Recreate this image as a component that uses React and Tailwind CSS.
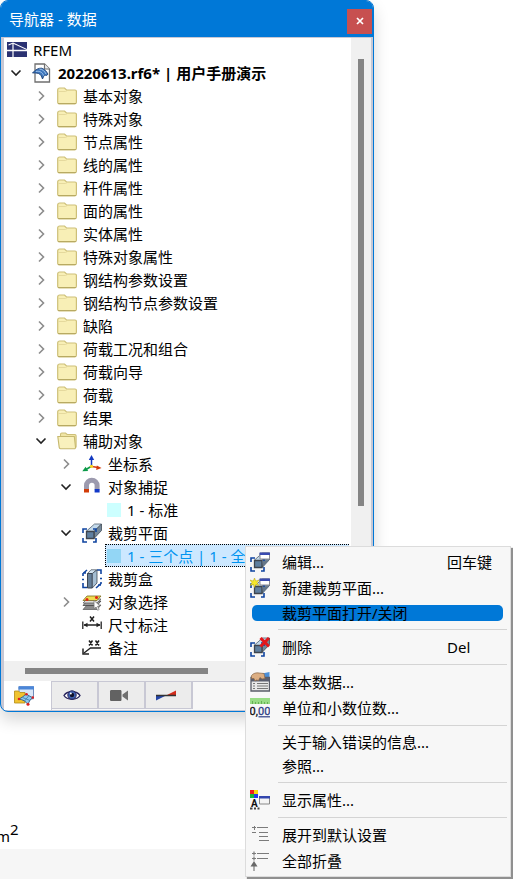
import { useState } from 'react'

const SANS = "font-['Noto_Sans','Noto_Sans_CJK_SC',sans-serif]"

function Svg({ children, crisp }) {
  return (
    <svg
      viewBox="0 0 20 20"
      className="size-5 shrink-0"
      fill="none"
      shapeRendering={crisp ? 'crispEdges' : 'auto'}
      aria-hidden="true"
    >
      {children}
    </svg>
  )
}

const RfemIcon = () => (
  <Svg>
    <path d="M0 2h20v15H0z" fill="#2b3272" />
    <path d="M0 10.500h20" stroke="#fff" strokeWidth="1.400" />
    <path d="M6 3v14" stroke="#fff" strokeWidth="1.200" />
    <path d="M1.500 5l4.500-2L20 9.500" stroke="#fff" strokeWidth="1.100" />
  </Svg>
)

const ModelIcon = () => (
  <Svg>
    <path d="M3 1h9.500l5 5v13H3z" fill="#fff" stroke="#6f6f6f" strokeWidth="1.300" />
    <path d="M12.500 1v5h5" fill="#eee" stroke="#6f6f6f" strokeWidth="1.200" />
    <path d="M.5 10C3.500 6.500 6.500 5 9.500 5.200c3 .8 5 3 6.500 6l-1.500 1.300c-1.800-.6-2.600 0-3 1.300L10.500 16C9.500 13 8.500 11.300 6.500 10.500 4.500 9.800 2.500 9.800.5 10z" fill="#3f77bd" stroke="#1d4277" strokeWidth=".9" />
    <path d="M4 8.500c3.500-.8 6.500.8 7.500 4M7.500 6c3 .2 5.200 2.200 6.500 5" stroke="#a9cdf0" strokeWidth=".9" />
  </Svg>
)

const FolderIcon = () => (
  <Svg>
    <path d="M.7 4c0-1 .7-2 2-2h4.800l2 2H18c.9 0 1.400.5 1.400 1.300v11c0 .9-.6 1.500-1.500 1.500H2.200C1.300 17.800.7 17.200.7 16.300z" fill="#f8efb6" stroke="#cdbf78" strokeWidth="1.200" />
    <path d="M1.500 5.500h7L10 4.700" stroke="#dfd397" strokeWidth=".8" />
    <path d="M1 17.500h18" stroke="#b8aa62" />
  </Svg>
)

const FolderOpenIcon = () => (
  <Svg>
    <path d="M3.500 3.500c0-.9.5-1.500 1.400-1.500h3.600l1.700 1.500h7.600c.8 0 1.300.5 1.300 1.300V16H3.500z" fill="#f0e5a5" stroke="#cdbf78" strokeWidth="1.100" />
    <path d="M.8 5.500h16.500l1.200 10.800c.1.900-.4 1.400-1.200 1.400H3.500c-.8 0-1.200-.5-1.300-1.300z" fill="#f9f1bd" stroke="#c6b86f" strokeWidth="1.100" />
  </Svg>
)

const AxesIcon = () => (
  <Svg>
    <path d="M9.500 12V4" stroke="#1238c0" strokeWidth="1.500" />
    <path d="M9.500 1l2.700 5H6.800z" fill="#1238c0" />
    <path d="M10 12.500l6 1" stroke="#d33a0c" strokeWidth="1.500" />
    <path d="M19.500 14l-5.300 2 .6-4.400z" fill="#d33a0c" />
    <path d="M9 12.500l-5 3" stroke="#0b9a48" strokeWidth="1.500" />
    <path d="M.3 17.300l3.300-4.600 2.600 4.300z" fill="#0b9a48" />
    <circle cx="9.500" cy="12.300" r="1.600" fill="#f7d51b" />
  </Svg>
)

const MagnetIcon = () => (
  <Svg>
    <path d="M4.500 12.500V8.500a5.300 5.300 0 0 1 10.600 0v4" stroke="#9c9aae" strokeWidth="5" />
    <path d="M2 12h5v3.500H2z" fill="#d23c08" />
    <path d="M12.600 12h5v3.500h-5z" fill="#1238c8" />
  </Svg>
)

const Corners = () => (
  <path d="M1 10V6h4M11 6h3v3M1 15v4h4M11 19h3v-4" stroke="#0f44a0" strokeWidth="1.600" />
)

const Beam = () => (
  <>
    <path d="M4 8.500L12.500 1h7L12 8.500z" fill="#c3d9ea" stroke="#53616e" strokeWidth=".8" />
    <path d="M12 8.500L19.500 1v6.500L12 15.500z" fill="#74889a" stroke="#414b56" strokeWidth=".8" />
    <path d="M4.500 8.500H12v7H4.500z" fill="#5f7f9f" stroke="#3f444c" strokeWidth="1.300" />
  </>
)

const DialogBadge = () => (
  <>
    <path d="M10 1h9.500v6H10z" fill="#fff" stroke="#8a8a92" />
    <path d="M9.500 .5H20V3H9.500z" fill="#3a4bb0" />
  </>
)

const ClipPlaneIcon = () => (
  <Svg>
    <Beam />
    <Corners />
  </Svg>
)

const ClipEditIcon = () => (
  <Svg>
    <Beam />
    <path d="M12 8.500h7L13 15z" fill="#65778a" />
    <Corners />
    <DialogBadge />
  </Svg>
)

const ClipNewIcon = () => (
  <Svg>
    <Beam />
    <path d="M12 8.500h7L13 15z" fill="#65778a" />
    <Corners />
    <DialogBadge />
    <path d="M4.500 0l1.200 3L9 2 7 4.800 9 7.500 5.700 6.600 4.500 9.500 3.300 6.600 0 7.500l2-2.700L0 2l3.300 1z" fill="#f6e82a" stroke="#b3a316" strokeWidth=".5" />
  </Svg>
)

const ClipDeleteIcon = () => (
  <Svg>
    <Beam />
    <Corners />
    <path d="M10.500 1l8.500 8.500M19 1l-8.500 8.500" stroke="#e3161b" strokeWidth="3" />
  </Svg>
)

const ClipBoxIcon = () => (
  <Svg>
    <path d="M1 7V4.500L5 1M15 1h4v4M1 14v4.500h4M14 19l5-4.500V13M0 10.500h2M18 9.500h2M1 4h3M16 16h3" stroke="#0f44a0" strokeWidth="1.600" />
    <path d="M5.500 4.500L9 .8h5.500L11 4.500z" fill="#d4e4f0" stroke="#4f5b66" strokeWidth=".8" />
    <path d="M5.500 4.500h4.800V19H5.500z" fill="#647f99" stroke="#3c4652" />
    <path d="M10.300 4.500L15 .8V14l-4.700 5z" fill="#a5bed2" stroke="#3c4652" strokeWidth=".8" />
  </Svg>
)

const LayersIcon = () => (
  <Svg>
    <path d="M1 17.500l4-4.500h14l-4 4.500z" fill="#8b8b8b" stroke="#555" strokeWidth=".7" />
    <path d="M1 13.500L5 9h14l-4 4.500z" fill="#9a9a9a" stroke="#444" strokeWidth=".8" />
    <path d="M1 11l4-4h14l-4 4z" fill="#ddd" stroke="#555" strokeWidth=".7" />
    <path d="M1 8.500l4-4.500h14l-4 4.500z" fill="#f0dc50" stroke="#7a6a1c" strokeWidth=".8" />
    <circle cx="5" cy="7.500" r="1.500" fill="#e02314" />
    <circle cx="14.500" cy="5.500" r="1.500" fill="#e02314" />
    <path d="M12 8.500l6 5.500-2.500.3 1.700 3.200-1.600.8-1.500-3.300-2 1.600z" fill="#fff" stroke="#777" strokeWidth=".7" />
  </Svg>
)

const DimensionIcon = () => (
  <Svg>
    <path d="M.8 6.500v7.500M19.200 6.500v7.500M2 10h16" stroke="#222" strokeWidth="1.300" />
    <path d="M1.500 10l4-2.300v4.600zM18.500 10l-4-2.300v4.600z" fill="#222" />
    <path d="M8 1.500l4 5M12 1.500l-4 5" stroke="#222" strokeWidth="1.500" />
  </Svg>
)

const NoteIcon = () => (
  <Svg>
    <path d="M19 10H8.500L2 15" stroke="#222" strokeWidth="1.300" />
    <path d="M1 10.500V16h6" stroke="#222" strokeWidth="1.500" />
    <path d="M7 2.500l3.500 5M10.500 2.500L7 7.500M13.500 2.500l3.500 5M17 2.500l-3.500 5" stroke="#222" strokeWidth="1.500" />
  </Svg>
)

const BaseDataIcon = () => (
  <Svg>
    <path d="M12 1.500L19.500 0v9H12z" fill="#4c8fd8" />
    <path d="M1 5.500h18.500V19H1z" fill="#e8e8e8" stroke="#5a5d68" strokeWidth="1.300" />
    <path d="M1 6h18.500v3.500H1z" fill="#5b5e6e" />
    <path d="M1.500 3.500C3.500 1 6.500.5 9 1l5 .5 1 5-3 .5-2-1.500-1.500 3-2-.5-1.500 1L4 6.500H1.500z" fill="#dcae83" stroke="#8a6748" strokeWidth=".7" />
    <path d="M3 11.500h2M3 14h2M3 16.500h2M7 11.500h11M7 14h11M7 16.500h11" stroke="#777" strokeWidth="1.200" />
  </Svg>
)

const UnitsIcon = () => (
  <Svg>
    <path d="M0 0h20v6H0z" fill="#98dc85" />
    <path d="M2.500 3v3M5.500 4v2M8.500 4v2M11.500 3v3M14.500 4v2M17.500 4v2" stroke="#5aa548" strokeWidth=".8" />
    <text x="-.5" y="17" fontSize="11" fontFamily="Roboto, sans-serif" fill="#111" stroke="#111" strokeWidth=".3">0,</text>
    <text x="8" y="17" fontSize="11" fontFamily="Roboto, sans-serif" fill="#2d3d85" stroke="#2d3d85" strokeWidth=".3">00</text>
    <path d="M8.500 18.800H20" stroke="#2d3d85" strokeWidth="1.200" />
  </Svg>
)

const DisplayIcon = () => (
  <Svg>
    <path d="M0 0h4v4H0z" fill="#ee1c1c" />
    <path d="M4 0h4v4H4z" fill="#f4d90f" />
    <path d="M0 4h4v4H0z" fill="#15b53a" />
    <path d="M4 4h4v4H4z" fill="#2439e8" />
    <path d="M9.500 7h10v7h-10z" fill="#f4f4f4" stroke="#888" />
    <path d="M9 6h11v2.500H9z" fill="#3346ae" />
    <text x="1" y="16.500" fontSize="10" fontWeight="700" fontFamily="Roboto, sans-serif" fill="#111">A</text>
    <path d="M0 18.500h2.500M4 18.500h2M7.500 18.500h2" stroke="#444" strokeWidth="2" />
  </Svg>
)

const ExpandIcon = () => (
  <Svg crisp>
    <path d="M7 2.500h11M9 7.500h9M9 11.500h9M9 15.500h10M2 7.500h4M2 2.500h4M4 .5v4" stroke="#7b7b7b" />
  </Svg>
)

const CollapseIcon = () => (
  <Svg>
    <path d="M7 2.500h12M7 7.500h11M2 2.500h4M4 .5v4M2 7.500h4M4 5.500v4M4 14v6" stroke="#7b7b7b" strokeWidth="1.200" />
    <path d="M4 10l3.500 5.500h-7z" fill="#686868" />
  </Svg>
)

const DataTabIcon = () => (
  <Svg>
    <path d="M5 .8h14.500v12H5z" fill="#d9e7f8" stroke="#6f8dbb" />
    <path d="M4.500 .3h15.500v3.200H4.500z" fill="#4b86d8" />
    <path d="M.5 5h4l1.500 1.500h5V17H.5z" fill="#f0c330" stroke="#b38a14" strokeWidth=".8" />
    <path d="M4.500 13C8 12 10 9.500 12.500 8c2 1.500 4 3 6.500 3.500-2.500 1.500-4 4-5 7-2-3-5-5-9.500-5.500z" fill="#8cc8ee" stroke="#2b5a86" strokeWidth=".9" />
    <path d="M8.500 11.500l7.500 3M15 9.500L10.500 15" stroke="#3d78aa" strokeWidth=".8" />
    <g fill="#dd2020">
      <circle cx="5" cy="13" r="1.300" />
      <circle cx="12.500" cy="8.300" r="1.300" />
      <circle cx="18.800" cy="11.500" r="1.300" />
      <circle cx="14" cy="18.300" r="1.500" />
    </g>
  </Svg>
)

const EyeIcon = () => (
  <Svg>
    <path d="M2 10.500C5 5.500 15 5.500 18 10.500 15 15.500 5 15.500 2 10.500z" fill="#fff" stroke="#28235c" strokeWidth="1.400" />
    <circle cx="10" cy="10" r="4.200" fill="#4064b4" stroke="#28235c" />
    <circle cx="10" cy="10" r="2.200" fill="#10102a" />
    <circle cx="8.800" cy="8.500" r="1" fill="#fff" />
  </Svg>
)

const CameraIcon = () => (
  <Svg>
    <path d="M2.500 5H11c1 0 1.500.5 1.500 1.500v8c0 1-.5 1.500-1.500 1.500H2.500C1.500 16 1 15.500 1 14.500v-8C1 5.500 1.500 5 2.500 5z" fill="#626262" />
    <path d="M13.500 9.500L19 5.500v10l-5.500-4z" fill="#707070" />
  </Svg>
)

const ResultTabIcon = () => (
  <Svg>
    <path d="M0 10.500h10L0 15.500z" fill="#2647a8" />
    <path d="M10 10.500h10v-5z" fill="#d32c1b" />
    <path d="M0 10.500h20" stroke="#333" strokeWidth="1.400" />
  </Svg>
)

const TREE = [
  { level: 0, label: '20220613.rf6* | 用户手册演示', icon: ModelIcon, open: true, bold: true },
  { level: 1, label: '基本对象', icon: FolderIcon, open: false },
  { level: 1, label: '特殊对象', icon: FolderIcon, open: false },
  { level: 1, label: '节点属性', icon: FolderIcon, open: false },
  { level: 1, label: '线的属性', icon: FolderIcon, open: false },
  { level: 1, label: '杆件属性', icon: FolderIcon, open: false },
  { level: 1, label: '面的属性', icon: FolderIcon, open: false },
  { level: 1, label: '实体属性', icon: FolderIcon, open: false },
  { level: 1, label: '特殊对象属性', icon: FolderIcon, open: false },
  { level: 1, label: '钢结构参数设置', icon: FolderIcon, open: false },
  { level: 1, label: '钢结构节点参数设置', icon: FolderIcon, open: false },
  { level: 1, label: '缺陷', icon: FolderIcon, open: false },
  { level: 1, label: '荷载工况和组合', icon: FolderIcon, open: false },
  { level: 1, label: '荷载向导', icon: FolderIcon, open: false },
  { level: 1, label: '荷载', icon: FolderIcon, open: false },
  { level: 1, label: '结果', icon: FolderIcon, open: false },
  { level: 1, label: '辅助对象', icon: FolderOpenIcon, open: true },
  { level: 2, label: '坐标系', icon: AxesIcon, open: false },
  { level: 2, label: '对象捕捉', icon: MagnetIcon, open: true },
  { level: 3, label: '1 - 标准', swatch: 'bg-[#ccffff]' },
  { level: 2, label: '裁剪平面', icon: ClipPlaneIcon, open: true },
  { level: 3, label: '1 - 三个点 | 1 - 全', swatch: 'bg-[#93d6f5]', selected: true },
  { level: 2, label: '裁剪盒', icon: ClipBoxIcon },
  { level: 2, label: '对象选择', icon: LayersIcon, open: false },
  { level: 2, label: '尺寸标注', icon: DimensionIcon },
  { level: 2, label: '备注', icon: NoteIcon },
]

const INDENT = ['pl-1', 'pl-[29px]', 'pl-[54px]', 'pl-[101px]']

const MENU = [
  [
    { label: '编辑...', icon: ClipEditIcon, shortcut: '回车键' },
    { label: '新建裁剪平面...', icon: ClipNewIcon },
    { label: '裁剪平面打开/关闭', active: true },
  ],
  [{ label: '删除', icon: ClipDeleteIcon, shortcut: 'Del' }],
  [
    { label: '基本数据...', icon: BaseDataIcon },
    { label: '单位和小数位数...', icon: UnitsIcon },
  ],
  [{ label: '关于输入错误的信息...' }, { label: '参照...' }],
  [{ label: '显示属性...', icon: DisplayIcon }],
  [
    { label: '展开到默认设置', icon: ExpandIcon },
    { label: '全部折叠', icon: CollapseIcon },
  ],
]

const TABS = [
  { label: '数据', icon: DataTabIcon },
  { label: '显示', icon: EyeIcon },
  { label: '视图', icon: CameraIcon },
  { label: '结果', icon: ResultTabIcon },
]

function Chevron({ open, label }) {
  return (
    <button type="button" aria-label={label} className="flex size-4 shrink-0 items-center justify-center">
      <svg viewBox="0 0 16 16" className="size-4" fill="none" strokeWidth="1.600">
        {open ? <path d="M3.500 5.500L8 10l4.500-4.500" stroke="#222" /> : <path d="M6 3.500L10.500 8 6 12.500" stroke="#8c8c8c" />}
      </svg>
    </button>
  )
}

function TreeRow({ item }) {
  const Icon = item.icon

  if (item.level === 3) {
    return (
      <li role="treeitem" aria-selected={!!item.selected} className={`flex h-[23px] pr-0.5 ${INDENT[3]}`}>
        <div
          className={`flex min-w-0 flex-1 items-center gap-1.5 border border-dotted pl-px ${
            item.selected ? 'border-black bg-[#cce8ff] text-[#0094f0]' : 'border-transparent'
          }`}
        >
          <span className={`size-3.5 shrink-0 ${item.swatch}`} />
          <span className="whitespace-nowrap">{item.label}</span>
        </div>
      </li>
    )
  }

  return (
    <li role="treeitem" aria-expanded={item.open} className={`flex h-[23px] items-center ${INDENT[item.level]}`}>
      {item.open === undefined ? <span className="w-4 shrink-0" /> : <Chevron open={item.open} label={item.label} />}
      <span className="mr-1.5 ml-2 shrink-0">
        <Icon />
      </span>
      <span className={`whitespace-nowrap ${item.bold ? 'font-bold' : ''}`}>{item.label}</span>
    </li>
  )
}

function Navigator() {
  const [tab, setTab] = useState(0)

  return (
    <section className="absolute top-0 left-0 flex w-[374px] flex-col overflow-hidden rounded-lg border border-[#0078d7] bg-[#c8c8d4] shadow-[0_8px_16px_rgba(0,0,0,0.16)]">
      <header className="flex h-9 items-center justify-between bg-[#0078d7] pr-px pl-2 text-white">
        <h1>导航器 - 数据</h1>
        <button type="button" aria-label="关闭" className="mt-1 flex size-[25px] items-center justify-center bg-[#c75050]">
          <svg viewBox="0 0 8 8" className="size-2" stroke="#fff" strokeWidth="1.700">
            <path d="M1 1l6 6M7 1L1 7" />
          </svg>
        </button>
      </header>

      <div className="mt-px mr-0.5 ml-[3px] flex bg-white">
        <div className="min-w-0 flex-1">
          <ul role="tree" className="pb-0.5">
            <li role="treeitem" className="flex h-[23px] items-center gap-1.5 pl-[3px]">
              <RfemIcon />
              <span>RFEM</span>
            </li>
            {TREE.map((item) => (
              <TreeRow key={item.label} item={item} />
            ))}
          </ul>
          <div className="h-5 bg-[#f0f0f0] pt-[7px] pl-[21px]">
            <div className="h-1.5 w-[183px] bg-[#858585]" />
          </div>
        </div>
        <div className="w-5 bg-[#f0f0f0] pt-[21px] pl-[7px]">
          <div className="h-[447px] w-1.5 bg-[#858585]" />
        </div>
      </div>

      <div role="tablist" className="mr-0.5 mb-px ml-[3px] flex h-[29px] items-start bg-[#f7f7f7]">
        {TABS.map(({ label, icon: Icon }, i) => (
          <button
            key={label}
            type="button"
            role="tab"
            aria-label={label}
            aria-selected={tab === i}
            onClick={() => setTab(i)}
            className={`flex items-center border-[#c8c8d4] ${
              tab === i ? 'h-[29px] w-12 border-r bg-white pl-2.5' : 'h-7 w-[47px] border-t border-r-2 border-b bg-[#ececec] pl-2.5'
            }`}
          >
            <Icon />
          </button>
        ))}
        <span className="flex-1 border-t border-[#c8c8d4]" />
      </div>
    </section>
  )
}

function ContextMenu() {
  return (
    <div
      role="menu"
      className="absolute top-[546px] left-[245px] w-[266px] border border-[#dcdcdc] bg-[#f7f7f7] py-0.5 pr-[3px] shadow-[2px_2px_1px_#909090]"
    >
      {MENU.map((group, g) => (
        <div key={g} className={g > 0 ? 'relative pt-[9px]' : ''}>
          {g > 0 && <hr className="absolute top-1 right-0 left-8 border-[#d4d4d4]" />}
          {group.map(({ label, icon: Icon, shortcut, active }) => (
            <button
              key={label}
              type="button"
              role="menuitem"
              className={`flex w-full items-center pl-1 text-left ${Icon ? 'h-[26px]' : 'h-6'}`}
            >
              <span
                className={`flex w-full items-center ${
                  active ? 'mr-1 ml-0.5 h-4 rounded-[5px] bg-[#0078d7] pl-[30px]' : Icon ? '' : 'pl-8'
                }`}
              >
                {Icon && (
                  <span className="mr-3">
                    <Icon />
                  </span>
                )}
                <span className="flex-1 whitespace-nowrap">{label}</span>
                {shortcut && <span className="w-[60px]">{shortcut}</span>}
              </span>
            </button>
          ))}
        </div>
      ))}
    </div>
  )
}

export default function App() {
  return (
    <main className={`relative flex min-h-screen flex-col overflow-hidden bg-white text-[15px] leading-[22px] text-black ${SANS}`}>
      <div className="flex flex-1 flex-col justify-end pb-0.5">
        <p className="-ml-1">
          m<sup className="text-[15px]">2</sup>
        </p>
      </div>
      <footer className="h-[30px] bg-[#f6f6f6]" />
      <Navigator />
      <ContextMenu />
    </main>
  )
}
